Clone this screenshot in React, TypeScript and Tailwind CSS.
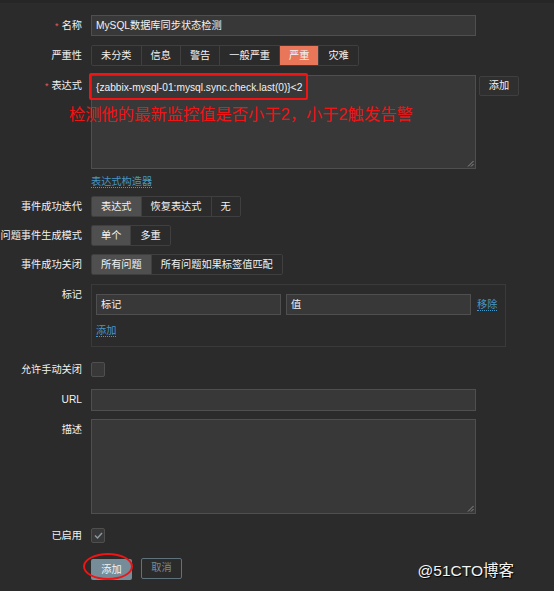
import type { ReactNode } from 'react'

const FONT = 'font-["Liberation_Sans","Noto_Sans_CJK_SC",sans-serif]'

function Row({ label, required, children, center, className = '' }: {
  label?: string; required?: boolean; children: ReactNode; center?: boolean; className?: string
}) {
  return (
    <div className={`flex ${center ? 'items-center' : 'items-start'} ${className}`}>
      <div className="w-[82px] shrink-0 whitespace-nowrap text-right text-[10.2px] leading-[21px] text-[#f2f2f2]">
        {required && <span className="mr-[3px] text-[9px] text-[#e45959]">*</span>}
        {label}
      </div>
      <div className="ml-[9px] flex flex-1 items-start">{children}</div>
    </div>
  )
}

function Segmented({ items, active, activeClass = 'bg-[#4f4f4f]' }: { items: string[]; active: number; activeClass?: string }) {
  return (
    <div className="flex h-[21px] overflow-hidden rounded-[2px] border border-[#3f3f3f]">
      {items.map((it, i) => (
        <span
          key={it}
          className={`flex items-center px-[9px] text-[10.2px] text-[#f2f2f2] ${i > 0 ? 'border-l border-[#3f3f3f]' : ''} ${i === active ? activeClass : 'bg-[#2b2b2b]'}`}
        >
          {it}
        </span>
      ))}
    </div>
  )
}

function Box({ className = '', children }: { className?: string; children?: ReactNode }) {
  return (
    <div className={`border border-[#4f4f4f] bg-[#383838] px-[4px] text-[10.2px] leading-[19px] text-[#f2f2f2] ${className}`}>
      {children}
    </div>
  )
}

function Grip() {
  return (
    <svg className="absolute bottom-[2px] right-[2px]" width="7" height="7" viewBox="0 0 7 7">
      <path d="M1 6.5 L6.5 1 M4 6.5 L6.5 4" stroke="#8a8a8a" strokeWidth="1" />
    </svg>
  )
}

function Check({ checked }: { checked?: boolean }) {
  return (
    <div className="flex h-[15px] w-[14px] items-center justify-center rounded-[2px] border border-[#4f4f4f] bg-[#383838]">
      {checked && (
        <svg width="9" height="7" viewBox="0 0 9 7">
          <path d="M1 3.5 L3.5 6 L8 1" fill="none" stroke="#8a9aa3" strokeWidth="1.4" />
        </svg>
      )}
    </div>
  )
}

function Link({ children }: { children: ReactNode }) {
  return (
    <span className="border-b border-dotted border-[#4796c4] text-[10.2px] leading-[11px] text-[#4796c4]">{children}</span>
  )
}

export default function App() {
  return (
    <div className={`relative h-[591px] w-[554px] overflow-hidden border-t-[3px] border-[#262626] bg-[#2b2b2b] pt-[12px] ${FONT}`}>
      <Row label="名称" required>
        <Box className="h-[21px] w-[385px]">MySQL数据库同步状态检测</Box>
      </Row>

      <Row label="严重性" className="mt-[8px]">
        <Segmented items={['未分类', '信息', '警告', '一般严重', '严重', '灾难']} active={4} activeClass="bg-[#e97659]" />
      </Row>

      <Row label="表达式" required className="mt-[9px]">
        <div className="relative">
          <Box className="h-[94px] w-[385px] pt-[2px]">{'{zabbix-mysql-01:mysql.sync.check.last(0)}<2'}</Box>
          <Grip />
          <div className="absolute left-[-2px] top-[-2px] h-[27px] w-[219px] rounded-[2px] border-2 border-[#f01414]" />
          <div className="absolute left-[-22px] top-[28px] whitespace-nowrap text-[16.3px] leading-[22px] text-[#f01414]">
            检测他的最新监控值是否小于2，小于2触发告警
          </div>
        </div>
        <button className="ml-[3px] mt-px h-[20px] w-[40px] rounded-[2px] border border-[#3f3f3f] bg-[#2f2f2f] text-[10.2px] text-[#f2f2f2]">
          添加
        </button>
      </Row>

      <Row className="mt-[7px]">
        <Link>表达式构造器</Link>
      </Row>

      <Row label="事件成功迭代" className="mt-[8px]">
        <Segmented items={['表达式', '恢复表达式', '无']} active={0} />
      </Row>

      <Row label="问题事件生成模式" className="mt-[8px]">
        <Segmented items={['单个', '多重']} active={0} />
      </Row>

      <Row label="事件成功关闭" className="mt-[8px]">
        <Segmented items={['所有问题', '所有问题如果标签值匹配']} active={0} />
      </Row>

      <Row label="标记" className="mt-[9px]">
        <div className="w-[415px] border border-[#3a3a3a] px-[4px] pb-[9px] pt-[9px]">
          <div className="flex items-center">
            <Box className="h-[21px] w-[185px] text-[#8a8a8a]">标记</Box>
            <Box className="ml-[5px] h-[21px] w-[185px] text-[#8a8a8a]">值</Box>
            <span className="ml-[6px] flex"><Link>移除</Link></span>
          </div>
          <div className="mt-[10px] flex">
            <Link>添加</Link>
          </div>
        </div>
      </Row>

      <Row label="允许手动关闭" center className="mt-[12px]">
        <Check />
      </Row>

      <Row label="URL" className="mt-[9px]">
        <Box className="h-[22px] w-[385px]" />
      </Row>

      <Row label="描述" className="mt-[8px]">
        <div className="relative w-[385px]">
          <Box className="h-[95px] w-[385px]" />
          <Grip />
        </div>
      </Row>

      <Row label="已启用" center className="mt-[11px]">
        <Check checked />
      </Row>

      <Row className="mt-[10px]">
        <div className="flex items-center gap-[9px]">
          <div className="relative">
            <button className="h-[21px] w-[41px] rounded-[2px] bg-[#768d99] text-[10.2px] text-[#f2f2f2]">添加</button>
            <div className="absolute left-[-8px] top-[-3px] h-[27px] w-[50px] rounded-[50%] border-2 border-[#f01414]" />
          </div>
          <button className="h-[21px] w-[41px] rounded-[2px] border border-[#5f717b] bg-transparent text-[10.2px] text-[#768d99]">取消</button>
        </div>
      </Row>

      <div className="absolute bottom-[10px] right-[40px] text-[15.5px] leading-[20px] text-[#f4f4f4] [text-shadow:1px_1px_1px_#000]">
        @51CTO博客
      </div>
    </div>
  )
}
